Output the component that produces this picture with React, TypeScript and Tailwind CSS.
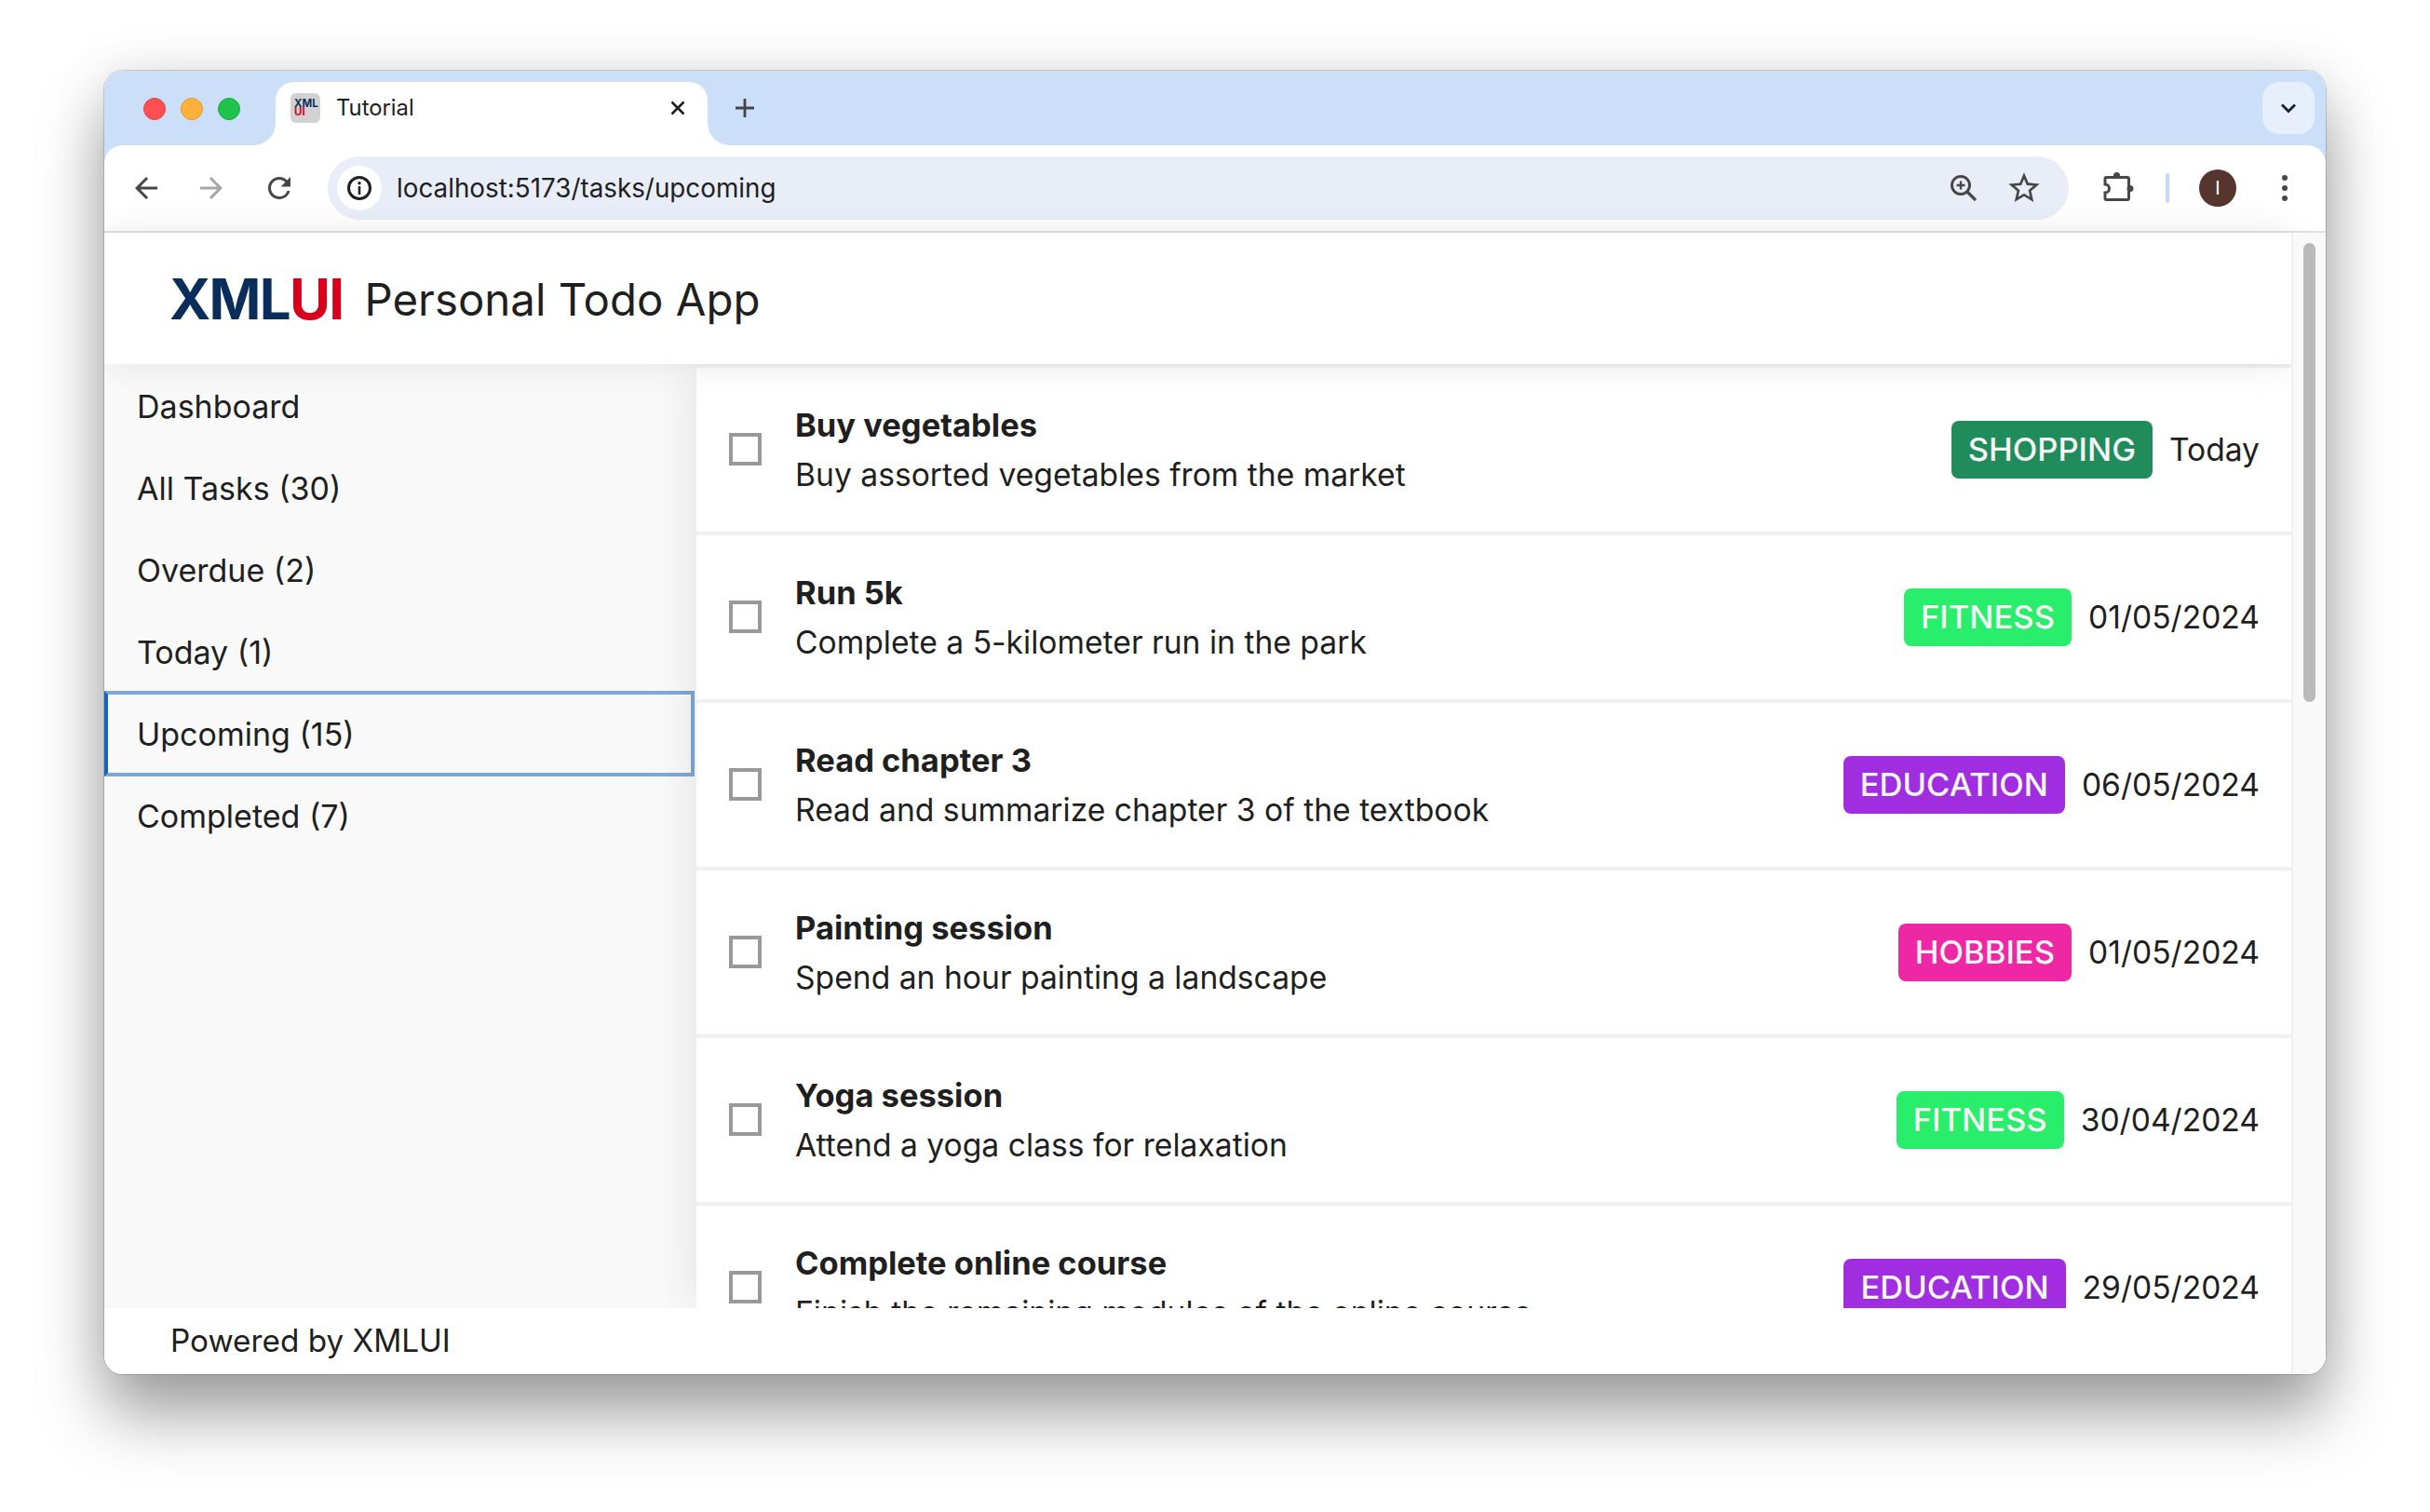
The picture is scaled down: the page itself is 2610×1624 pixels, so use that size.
const tasks = [
  { t: "Buy vegetables", d: "Buy assorted vegetables from the market", tag: "SHOPPING", c: "bg-[#218c5b]", date: "Today" },
  { t: "Run 5k", d: "Complete a 5-kilometer run in the park", tag: "FITNESS", c: "bg-[#28ee6c]", date: "01/05/2024" },
  { t: "Read chapter 3", d: "Read and summarize chapter 3 of the textbook", tag: "EDUCATION", c: "bg-[#a02ee0]", date: "06/05/2024" },
  { t: "Painting session", d: "Spend an hour painting a landscape", tag: "HOBBIES", c: "bg-[#ee28a5]", date: "01/05/2024" },
  { t: "Yoga session", d: "Attend a yoga class for relaxation", tag: "FITNESS", c: "bg-[#28ee6c]", date: "30/04/2024" },
  { t: "Complete online course", d: "Finish the remaining modules of the online course", tag: "EDUCATION", c: "bg-[#a02ee0]", date: "29/05/2024" },
];
const nav = ["Dashboard", "All Tasks (30)", "Overdue (2)", "Today (1)", "Upcoming (15)", "Completed (7)"];

function Flare({ side }: { side: "l" | "r" }) {
  return side === "l" ? (
    <span className="absolute -left-6 bottom-0 w-6 h-6 bg-white">
      <span className="block w-full h-full bg-[#cbdff9] rounded-br-[24px]" />
    </span>
  ) : (
    <span className="absolute -right-6 bottom-0 w-6 h-6 bg-white">
      <span className="block w-full h-full bg-[#cbdff9] rounded-bl-[24px]" />
    </span>
  );
}

function TabStrip() {
  return (
    <div className="h-[80px] shrink-0 bg-[#cbdff9] flex items-start pl-[42px]">
      <div className="flex gap-4 mt-[29px]">
        <span className="w-6 h-6 rounded-full bg-[#ff4f52] border border-[#e0443e]" />
        <span className="w-6 h-6 rounded-full bg-[#ffb03b] border border-[#e09a2e]" />
        <span className="w-6 h-6 rounded-full bg-[#1dc34a] border border-[#17a83e]" />
      </div>
      <div className="relative ml-[38px] mt-3 w-[464px] h-[68px] bg-white rounded-t-[20px] flex items-start pl-4">
        <Flare side="l" />
        <Flare side="r" />
        <div className="mt-3 w-8 h-8 rounded-[6px] bg-[#d2d2d2] flex flex-col pl-1 pt-[7px] text-[11.5px] leading-[8.5px] font-bold">
          <span className="text-[#0f2f5f]">XML</span>
          <span className="text-[#d9001b]">UI</span>
        </div>
        <span className="ml-[17px] mt-[13px] text-[23.8px] leading-[30px] text-[#1f1f1f]">Tutorial</span>
        <svg className="absolute left-[420px] top-[16px]" width="24" height="24" viewBox="0 0 24 24">
          <path d="M5.5 5.5 18.5 18.5M18.5 5.5 5.5 18.5" stroke="#1f1f1f" strokeWidth="2.6" />
        </svg>
      </div>
      <svg className="ml-[26px] mt-[26px]" width="28" height="28" viewBox="0 0 28 28">
        <path d="M14 4V24M4 14H24" stroke="#444" strokeWidth="2.8" />
      </svg>
      <div className="ml-auto mr-3 mt-3 w-14 h-14 rounded-[18px] bg-[#e7effd] flex items-center justify-center">
        <svg width="24" height="24" viewBox="0 0 24 24">
          <path d="M5 8.5 12 15.5 19 8.5" fill="none" stroke="#1f1f1f" strokeWidth="2.8" />
        </svg>
      </div>
    </div>
  );
}

function Toolbar() {
  return (
    <div className="h-[94px] shrink-0 bg-[#cbdff9]">
      <div className="h-full bg-white rounded-t-[20px] border-b-2 border-[#e0e0e0] flex items-start pl-[27px] pt-[28px]">
        <svg width="36" height="36" viewBox="0 0 24 24" fill="#474747">
          <path d="M20 11H7.83l5.59-5.59L12 4l-8 8 8 8 1.41-1.41L7.83 13H20z" />
        </svg>
        <svg className="ml-[34px]" width="36" height="36" viewBox="0 0 24 24" fill="#a6a6a6">
          <path d="M4 11h12.17l-5.59-5.59L12 4l8 8-8 8-1.41-1.41L16.17 13H4z" />
        </svg>
        <svg className="ml-[37px]" width="36" height="36" viewBox="0 0 24 24" fill="#474747">
          <path d="M17.65 6.35A7.958 7.958 0 0 0 12 4c-4.42 0-7.99 3.58-7.99 8s3.57 8 7.99 8c3.73 0 6.84-2.55 7.73-6h-2.08A5.99 5.99 0 0 1 12 18c-3.31 0-6-2.69-6-6s2.69-6 6-6c1.66 0 3.14.69 4.22 1.78L13 11h7V4l-2.35 2.35z" />
        </svg>
        <div className="-mt-4 ml-[34px] w-[1870px] h-[68px] rounded-full bg-[#e8edf7] flex items-center pl-[10px] pr-[28px]">
          <div className="w-12 h-12 rounded-full bg-white flex items-center justify-center">
            <svg width="28" height="28" viewBox="0 0 28 28">
              <circle cx="14" cy="14" r="11.5" fill="none" stroke="#1f1f1f" strokeWidth="3" />
              <circle cx="14" cy="8.8" r="1.7" fill="#1f1f1f" />
              <rect x="12.7" y="12" width="2.6" height="9" fill="#1f1f1f" />
            </svg>
          </div>
          <span className="ml-[16px] mt-[2px] text-[27.8px] text-[#1f1f1f]">localhost:5173/tasks/upcoming</span>
          <svg className="ml-auto" width="40" height="40" viewBox="0 0 40 40" fill="none" stroke="#474747">
            <circle cx="17" cy="17" r="9.5" strokeWidth="3" />
            <path d="M17 12.5V21.5M12.5 17H21.5" strokeWidth="2.4" />
            <path d="M24 24 33 33" strokeWidth="3.2" />
          </svg>
          <svg className="ml-[25px]" width="40" height="40" viewBox="0 0 24 24" fill="#474747">
            <path d="M22 9.24l-7.19-.62L12 2 9.19 8.63 2 9.24l5.46 4.73L5.82 21 12 17.27 18.18 21l-1.63-7.03L22 9.24zM12 15.4l-3.76 2.27 1-4.28-3.32-2.88 4.38-.38L12 6.1l1.71 4.04 4.38.38-3.32 2.88 1 4.28L12 15.4z" />
          </svg>
        </div>
        <svg className="-mt-[4px] ml-[33px]" width="40" height="40" viewBox="0 0 40 40" fill="none" stroke="#474747">
          <path d="M7.5 10.5H30a1.5 1.5 0 0 1 1.5 1.5V33a1.5 1.5 0 0 1-1.5 1.5H7.5A1.5 1.5 0 0 1 6 33V27a4.5 4.5 0 0 0 0-9V12a1.5 1.5 0 0 1 1.5-1.5z" strokeWidth="3" />
          <circle cx="18.5" cy="8.5" r="3.5" fill="#474747" stroke="none" />
          <circle cx="33" cy="22.5" r="3.5" fill="#474747" stroke="none" />
        </svg>
        <span className="ml-[31px] mt-[2px] w-1 h-8 rounded-full bg-[#c5daf7]" />
        <div className="-mt-[2px] ml-8 w-10 h-10 rounded-full bg-[#55352d] flex items-center justify-center text-white text-[20px]">
          I
        </div>
        <svg className="-mt-[2px] ml-8" width="40" height="40" viewBox="0 0 40 40" fill="#474747">
          <circle cx="20" cy="9" r="3" />
          <circle cx="20" cy="20" r="3" />
          <circle cx="20" cy="31" r="3" />
        </svg>
      </div>
    </div>
  );
}

function Sidebar() {
  return (
    <aside className="w-[636px] shrink-0 bg-[#f9f9f9] pt-px">
      {nav.map((n) =>
        n.startsWith("Upcoming") ? (
          <div key={n} className="relative z-10 h-[92px] -my-[2px] mr-[2px] border-4 border-[#7fa8d4] border-l-[#1565c0] pl-[31px] flex items-center text-[34px] text-[#1f1f1f]">
            {n}
          </div>
        ) : (
          <div key={n} className="h-[88px] pl-[35px] flex items-center text-[34px] text-[#1f1f1f]">
            {n}
          </div>
        )
      )}
    </aside>
  );
}

function Row({ task }: { task: (typeof tasks)[number] }) {
  return (
    <div className="h-[176px] shrink-0 bg-white flex items-center pl-[35px] pr-[34px]">
      <span className="w-[35px] h-[35px] shrink-0 -mt-px border-4 border-[#999999]" />
      <div className="ml-[36px] flex-1 min-w-0">
        <div className="text-[34.5px] leading-[53px] font-bold text-[#1f1f1f]">{task.t}</div>
        <div className="text-[33.65px] leading-[53px] text-[#1f1f1f]">{task.d}</div>
      </div>
      <span className={`h-[62px] -mt-px px-[18px] rounded-[8px] flex items-center text-[34.6px] font-medium text-[#f5f5f5] ${task.c}`}>
        {task.tag}
      </span>
      <span className="ml-[18px] text-[33.6px] text-[#1f1f1f]">{task.date}</span>
    </div>
  );
}

export default function App() {
  return (
    <div className="w-[2610px] h-[1624px] bg-white pl-[112px] pt-[76px] font-[Inter,sans-serif] overflow-hidden">
      <div className="w-[2386px] h-[1400px] rounded-[20px] shadow-[0_0_0_1px_rgba(0,0,0,0.16),0_44px_70px_rgba(0,0,0,0.36),0_0_60px_rgba(0,0,0,0.1)]">
        <div className="w-full h-full rounded-[20px] overflow-hidden flex flex-col bg-white">
          <TabStrip />
          <Toolbar />
          <div className="flex-1 min-h-0 flex">
            <div className="w-[2349px] flex flex-col">
              <header className="relative z-20 h-[141px] shrink-0 bg-white shadow-[0_0_36px_rgba(0,0,0,0.09)] flex items-center pl-[70px]">
                <span className="text-[60px] font-bold tracking-[-1.7px] leading-none">
                  <span className="text-[#0a2d5c]">XML</span>
                  <span className="text-[#d9001b]">UI</span>
                </span>
                <span className="ml-[23px] mt-[2px] text-[47.4px] text-[#1f1f1f]">Personal Todo App</span>
              </header>
              <div className="h-[1014px] shrink-0 flex overflow-hidden">
                <Sidebar />
                <main className="relative z-10 w-[1713px] bg-[#f0f0f0] shadow-[0_0_50px_rgba(0,0,0,0.1)] flex flex-col gap-1 pt-1">
                  {tasks.map((t) => (
                    <Row key={t.t} task={t} />
                  ))}
                </main>
              </div>
              <footer className="relative z-20 flex-1 bg-white pl-[71px] flex items-center text-[33.3px] text-[#1f1f1f]">
                Powered by XMLUI
              </footer>
            </div>
            <div className="relative z-30 flex-1 bg-[#f9f9f9] border-l-2 border-[#f0f0f0] pl-[11px] pt-[11px]">
              <div className="w-[13px] h-[493px] rounded-full bg-[#bababa]" />
            </div>
          </div>
        </div>
      </div>
    </div>
  );
}
